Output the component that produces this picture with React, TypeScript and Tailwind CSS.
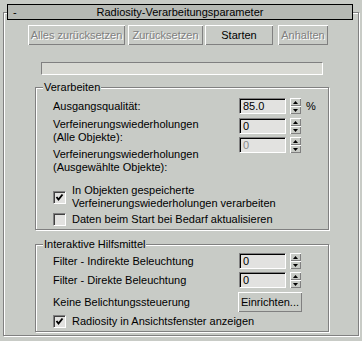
import React from "react";

const BG = "bg-[#c8cbc6]";

function Btn({ label, w, disabled }: { label: string; w: string; disabled?: boolean }) {
  return (
    <div
      className={`${w} h-[20px] flex items-center justify-center shadow-[inset_1px_1px_0_#fff,inset_-1px_-1px_0_#808080] ${
        disabled ? "text-[#808080] [text-shadow:1px_1px_0_#fff]" : "text-black"
      }`}
    >
      {label}
    </div>
  );
}

function Spinner() {
  const half = "h-[8px] flex items-center justify-center shadow-[inset_1px_1px_0_#fff,inset_-1px_-1px_0_#808080]";
  return (
    <div className="w-[11px] h-[16px] flex flex-col">
      <div className={half}>
        <svg width="5" height="3" viewBox="0 0 5 3">
          <polygon points="2.5,0 5,3 0,3" fill="#000" />
        </svg>
      </div>
      <div className={half}>
        <svg width="5" height="3" viewBox="0 0 5 3">
          <polygon points="0,0 5,0 2.5,3" fill="#000" />
        </svg>
      </div>
    </div>
  );
}

function Field({ value, disabled }: { value: string; disabled?: boolean }) {
  return (
    <div className="flex items-center">
      <div
        className={`w-[47px] h-[16px] bg-[#e2e2e0] border-t border-l border-t-[#808080] border-l-[#808080] border-b border-r border-b-white border-r-white shadow-[inset_1px_1px_0_#000] pl-[3px] leading-[14px] ${
          disabled ? "text-[#8a8a8a]" : "text-black"
        }`}
      >
        {value}
      </div>
      <div className="ml-[4px]">
        <Spinner />
      </div>
    </div>
  );
}

function Check({ checked }: { checked?: boolean }) {
  return (
    <div className="w-[13px] h-[13px] shrink-0 bg-[#e2e2e0] border-t border-l border-t-[#808080] border-l-[#808080] border-b border-r border-b-white border-r-white shadow-[inset_1px_1px_0_#404040] flex items-center justify-center">
      {checked && (
        <svg width="9" height="9" viewBox="0 0 9 9">
          <polyline points="1.5,4 3.5,6.5 7.5,1.5" fill="none" stroke="#000" strokeWidth="1.9" />
        </svg>
      )}
    </div>
  );
}

function Group({ title, h, children }: { title: string; h: string; children: React.ReactNode }) {
  return (
    <div className={`ml-[31px] w-[294px] ${h} border border-[#808080] shadow-[inset_1px_1px_0_#fff,1px_1px_0_#fff]`}>
      <div className={`-mt-[7px] ml-[7px] h-[13px] leading-[13px] px-[1px] w-fit ${BG}`}>{title}</div>
      {children}
    </div>
  );
}

export default function App() {
  return (
    <div
      className={`w-[362px] h-[341px] overflow-hidden ${BG} pt-[12px] pl-[3px] text-[11px] leading-[13px] text-black font-['Liberation_Sans',Arial,sans-serif]`}
    >
      <div className="w-[356px] h-[324px] border border-[#808080] shadow-[inset_1px_1px_0_#fff,1px_1px_0_#fff]">
        {/* Rollout title */}
        <div className="-mt-[9px] ml-[3px] w-[346px] h-[16px] border border-black bg-[#b6b9b4] flex items-center">
          <span className="w-[20px] pl-[5px]">-</span>
          <span className="flex-1 text-center">Radiosity-Verarbeitungsparameter</span>
          <span className="w-[20px]" />
        </div>

        {/* Buttons */}
        <div className="mt-[5px] ml-[24px] flex">
          <Btn label="Alles zurücksetzen" w="w-[97px]" disabled />
          <div className="ml-[3px]">
            <Btn label="Zurücksetzen" w="w-[75px]" disabled />
          </div>
          <div className="ml-[2px]">
            <Btn label="Starten" w="w-[68px]" />
          </div>
          <div className="ml-[5px]">
            <Btn label="Anhalten" w="w-[50px]" disabled />
          </div>
        </div>

        {/* Progress */}
        <div className="mt-[17px] ml-[37px] w-[282px] h-[13px] bg-[#d8d9d3] border-t border-l border-t-[#808080] border-l-[#808080] border-b border-r border-b-white border-r-white" />

        <div className="mt-[12px]">
          <Group title="Verarbeiten" h="h-[143px]">
            <div className="mt-[4px] pl-[17px] flex items-center h-[16px]">
              <span className="w-[186px]">Ausgangsqualität:</span>
              <Field value="85.0" />
              <span className="ml-[5px]">%</span>
            </div>
            <div className="mt-[4px] pl-[17px] flex items-start">
              <div className="w-[186px]">
                <div>
                  Verfeinerungswiederholungen
                  <br />
                  (Alle Objekte):
                </div>
                <div className="mt-[4px]">
                  Verfeinerungswiederholungen
                  <br />
                  (Ausgewählte Objekte):
                </div>
              </div>
              <div className="flex flex-col gap-[3px]">
                <Field value="0" />
                <Field value="0" disabled />
              </div>
            </div>
            <div className="mt-[10px] pl-[17px] flex items-center gap-[6px]">
              <Check checked />
              <div>
                In Objekten gespeicherte
                <br />
                Verfeinerungswiederholungen verarbeiten
              </div>
            </div>
            <div className="mt-[3px] pl-[17px] flex items-center gap-[6px]">
              <Check />
              <div>Daten beim Start bei Bedarf aktualisieren</div>
            </div>
          </Group>
        </div>

        <div className="mt-[14px]">
          <Group title="Interaktive Hilfsmittel" h="h-[88px]">
            <div className="mt-[2px] pl-[17px] flex items-center h-[16px]">
              <span className="w-[186px]">Filter - Indirekte Beleuchtung</span>
              <Field value="0" />
            </div>
            <div className="mt-[3px] pl-[17px] flex items-center h-[16px]">
              <span className="w-[186px]">Filter - Direkte Beleuchtung</span>
              <Field value="0" />
            </div>
            <div className="mt-[4px] pl-[17px] flex items-center h-[20px]">
              <span className="w-[185px]">Keine Belichtungssteuerung</span>
              <Btn label="Einrichten..." w="w-[64px]" />
            </div>
            <div className="mt-[3px] pl-[17px] flex items-center gap-[6px]">
              <Check checked />
              <div>Radiosity in Ansichtsfenster anzeigen</div>
            </div>
          </Group>
        </div>
      </div>
    </div>
  );
}
